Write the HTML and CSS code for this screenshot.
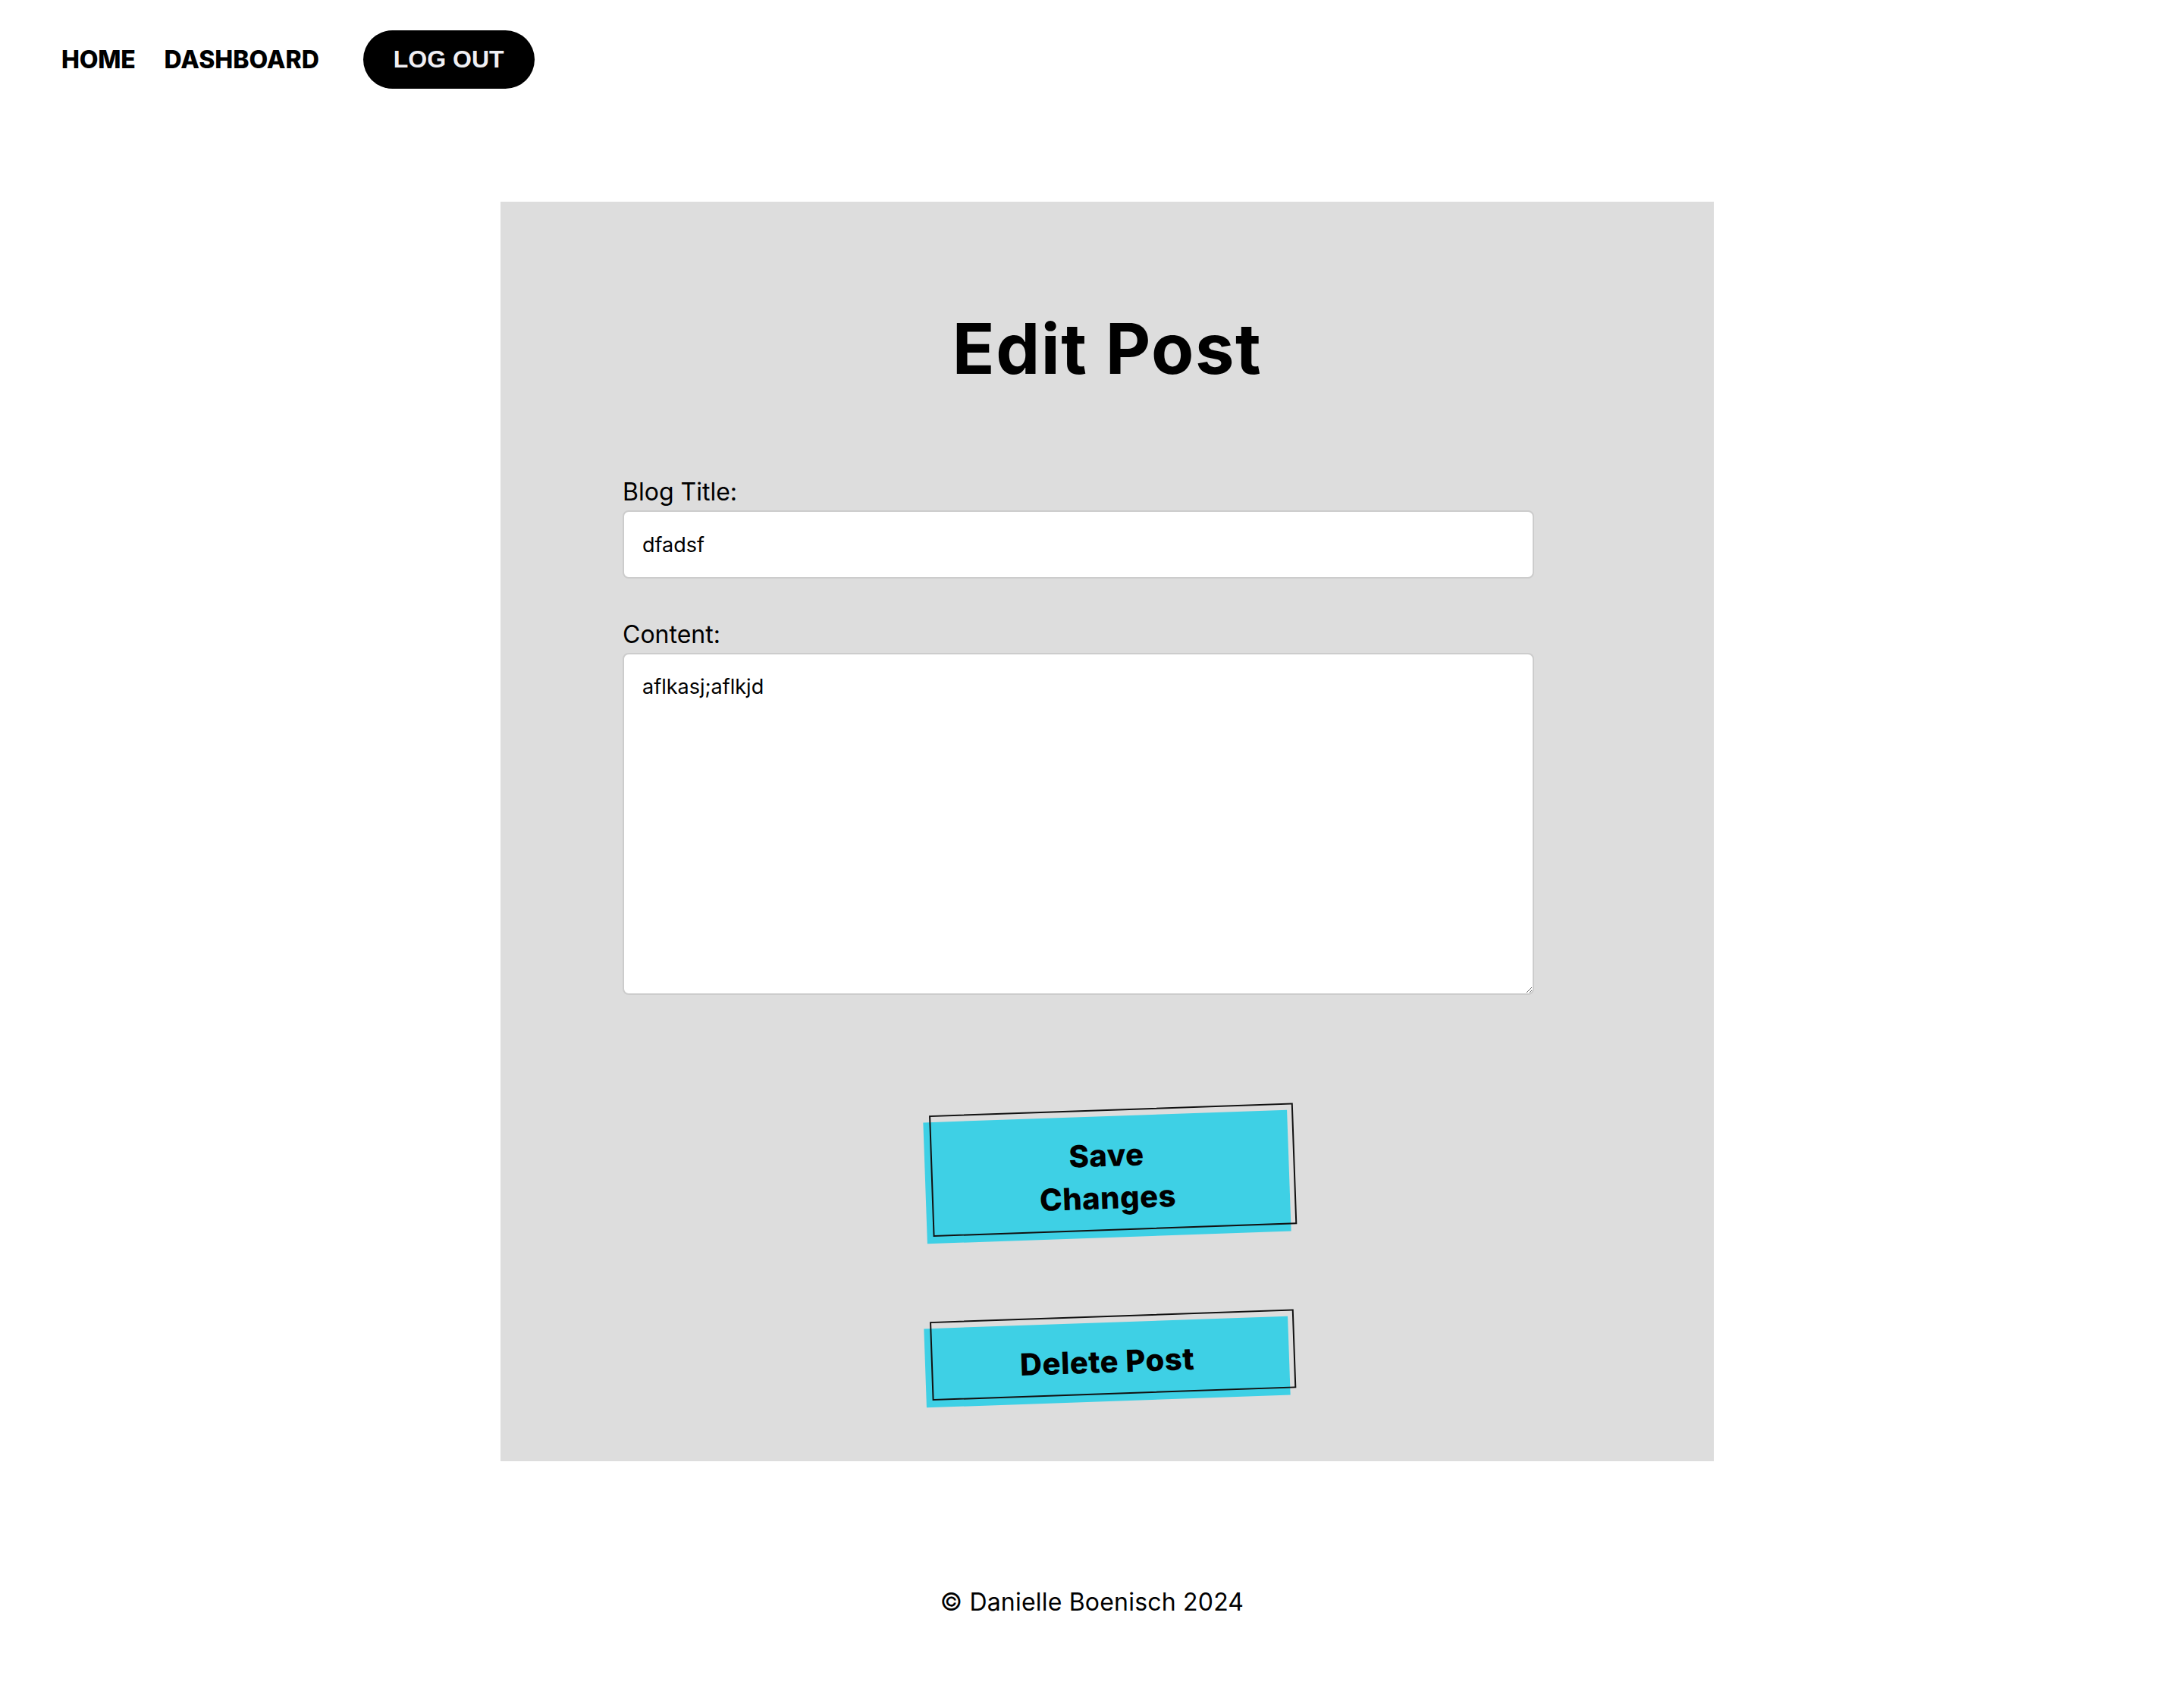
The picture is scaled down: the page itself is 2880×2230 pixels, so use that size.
FILE: index.html
```html
<!DOCTYPE html>
<html lang="en">
<head>
<meta charset="utf-8">
<title>Edit Post</title>
<link rel="stylesheet" href="styles.css">
</head>
<body>
<header class="nav">
  <a class="nav-link" href="#">HOME</a>
  <a class="nav-link" href="#">DASHBOARD</a>
  <button class="logout" type="button">LOG OUT</button>
</header>
<main class="card">
  <h1 class="card-title">Edit Post</h1>
  <form class="edit-form">
    <label class="field-label" for="title">Blog Title:</label>
    <input class="field-input" id="title" type="text" value="dfadsf">
    <label class="field-label field-label--gap" for="content">Content:</label>
    <textarea class="field-area" id="content">aflkasj;aflkjd</textarea>
    <div class="actions">
      <button class="sketch-btn sketch-btn--save" type="button"><span class="sketch-text">Save Changes</span></button>
      <button class="sketch-btn sketch-btn--delete" type="button"><span class="sketch-text">Delete Post</span></button>
    </div>
  </form>
</main>
<footer class="footer">© Danielle Boenisch 2024</footer>
</body>
</html>
```
FILE: styles.css
```css
* { box-sizing: border-box; }
html, body { margin: 0; padding: 0; background: #ffffff; }
body {
  font-family: Inter, "Noto Sans", sans-serif;
  color: #000;
  font-size: 32px;
  width: 2880px;
  min-height: 2230px;
}
.nav {
  display: flex;
  align-items: center;
  padding: 40px 0 0 81px;
  height: 117px;
}
.nav-link {
  color: #000;
  text-decoration: none;
  font-weight: 800;
  font-size: 32px;
  letter-spacing: -0.2px;
  margin-right: 38px;
}
.nav-link + .nav-link { margin-right: 58px; letter-spacing: 0; }
.logout {
  font-family: "Liberation Sans", Arial, sans-serif;
  font-weight: 700;
  font-size: 32px;
  color: #efeff4;
  background: #000;
  border: none;
  border-radius: 40px;
  padding: 20px 40px;
  height: 77px;
  line-height: 37px;
}
.card {
  margin: 149px 0 0 660px;
  width: 1600px;
  background: #dddddd;
  padding: 139px 0 79px 0;
}
.card-title {
  margin: 0;
  text-align: center;
  font-size: 92px;
  font-weight: 700;
  line-height: 1.2;
  letter-spacing: 1.5px;
}
.edit-form {
  margin: 110px 0 0 161px;
  width: 1202px;
  display: flex;
  flex-direction: column;
}
.field-label {
  display: block;
  font-size: 32px;
  line-height: 48px;
  font-weight: 400;
}
.field-label--gap { margin-top: 50px; }
.field-input, .field-area {
  font-family: Inter, "Noto Sans", sans-serif;
  font-size: 27px;
  color: #000;
  background: #fff;
  border: 2px solid #cccccc;
  border-radius: 8px;
  padding: 24px 24px;
  width: 100%;
  margin: 0;
}
.field-input { height: 90px; }
.field-area {
  height: 451px;
  line-height: 37px;
  resize: vertical;
  display: block;
}
.actions {
  display: flex;
  flex-direction: column;
  align-items: center;
  gap: 112px;
  margin-top: 160px;
  margin-left: -161px;
  width: 1600px;
}
.sketch-btn {
  position: relative;
  width: 480px;
  padding: 24px 110px;
  background: #3ed0e5;
  border: none;
  font-family: Inter, "Noto Sans", sans-serif;
  font-weight: 800;
  font-size: 40px;
  line-height: 56px;
  letter-spacing: 0.5px;
  color: #000;
  transform: rotate(-2deg);
  text-align: center;
}
.sketch-btn::after {
  content: "";
  position: absolute;
  inset: 0;
  border: 2px solid #111;
  transform: translate(8px, -9px);
}
.sketch-text { display: block; }
.footer {
  margin-top: 162px;
  text-align: center;
  font-size: 32px;
  line-height: 48px;
  letter-spacing: 0.2px;
}
```
